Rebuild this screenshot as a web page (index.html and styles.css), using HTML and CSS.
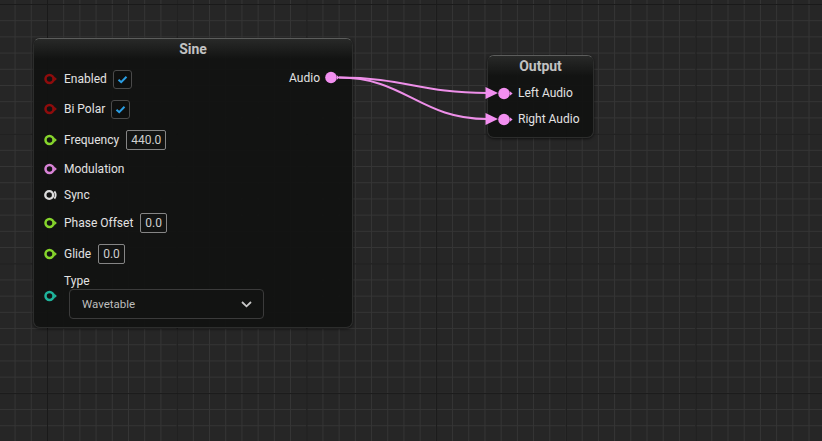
FILE: index.html
```html
<!DOCTYPE html>
<html lang="en">
<head>
    <meta charset="UTF-8">
    <title>MetaSound Graph</title>
    <link rel="stylesheet" href="styles.css">
</head>
<body>
    <div class="graph">
        <div class="node node-sine">
            <div class="node-title">Sine</div>
            <div class="node-body">
                <div class="inputs">
                    <div class="row row-check">
                        <svg class="pin" width="13" height="12" viewBox="0 0 13 12"><circle cx="5.5" cy="6" r="4" fill="none" stroke="#8e0c0c" stroke-width="2.5"/><path d="M10.2 3.6 L12.9 6 L10.2 8.4Z" fill="#8e0c0c"/></svg>
                        <span class="label">Enabled</span>
                        <span class="check"><svg width="19" height="19" viewBox="0 0 19 19"><path d="M5.5 9.8 L8.2 12.2 L13.5 6.8" fill="none" stroke="#2a9ee4" stroke-width="2"/></svg></span>
                    </div>
                    <div class="row row-check">
                        <svg class="pin" width="13" height="12" viewBox="0 0 13 12"><circle cx="5.5" cy="6" r="4" fill="none" stroke="#8e0c0c" stroke-width="2.5"/><path d="M10.2 3.6 L12.9 6 L10.2 8.4Z" fill="#8e0c0c"/></svg>
                        <span class="label">Bi Polar</span>
                        <span class="check"><svg width="19" height="19" viewBox="0 0 19 19"><path d="M5.5 9.8 L8.2 12.2 L13.5 6.8" fill="none" stroke="#2a9ee4" stroke-width="2"/></svg></span>
                    </div>
                    <div class="row row-value">
                        <svg class="pin" width="13" height="12" viewBox="0 0 13 12"><circle cx="5.5" cy="6" r="4" fill="none" stroke="#86d42c" stroke-width="2.5"/><path d="M10.2 3.6 L12.9 6 L10.2 8.4Z" fill="#86d42c"/></svg>
                        <span class="label">Frequency</span>
                        <span class="value">440.0</span>
                    </div>
                    <div class="row">
                        <svg class="pin" width="13" height="12" viewBox="0 0 13 12"><circle cx="5.5" cy="6" r="4" fill="none" stroke="#d883d6" stroke-width="2.5"/><path d="M10.2 3.6 L12.9 6 L10.2 8.4Z" fill="#d883d6"/></svg>
                        <span class="label">Modulation</span>
                    </div>
                    <div class="row row-trigger">
                        <svg class="pin" width="13" height="12" viewBox="0 0 13 12"><circle cx="5.2" cy="6" r="3.9" fill="none" stroke="#dcdcdc" stroke-width="2.4"/><path d="M10.4 2.4 Q13 6 10.4 9.6" fill="none" stroke="#dcdcdc" stroke-width="1.8"/></svg>
                        <span class="label">Sync</span>
                    </div>
                    <div class="row row-value">
                        <svg class="pin" width="13" height="12" viewBox="0 0 13 12"><circle cx="5.5" cy="6" r="4" fill="none" stroke="#86d42c" stroke-width="2.5"/><path d="M10.2 3.6 L12.9 6 L10.2 8.4Z" fill="#86d42c"/></svg>
                        <span class="label">Phase Offset</span>
                        <span class="value">0.0</span>
                    </div>
                    <div class="row row-value">
                        <svg class="pin" width="13" height="12" viewBox="0 0 13 12"><circle cx="5.5" cy="6" r="4" fill="none" stroke="#86d42c" stroke-width="2.5"/><path d="M10.2 3.6 L12.9 6 L10.2 8.4Z" fill="#86d42c"/></svg>
                        <span class="label">Glide</span>
                        <span class="value">0.0</span>
                    </div>
                    <div class="row row-enum">
                        <svg class="pin" width="13" height="12" viewBox="0 0 13 12"><circle cx="5.5" cy="6" r="4" fill="none" stroke="#1fb49c" stroke-width="2.5"/><path d="M10.2 3.6 L12.9 6 L10.2 8.4Z" fill="#1fb49c"/></svg>
                        <div class="enum">
                            <span class="label">Type</span>
                            <div class="dropdown">
                                <span>Wavetable</span>
                                <svg width="11" height="7" viewBox="0 0 11 7"><path d="M1 1 L5.5 5.3 L10 1" fill="none" stroke="#c8c8c8" stroke-width="1.8"/></svg>
                            </div>
                        </div>
                    </div>
                </div>
                <div class="outputs">
                    <div class="row">
                        <span class="label">Audio</span>
                        <svg class="pin pin-out" width="15" height="13" viewBox="0 0 15 13"><circle cx="6" cy="6.5" r="5.8" fill="#f28ff0"/><path d="M11.8 4.3 L14.6 6.5 L11.8 8.7Z" fill="#f28ff0"/></svg>
                    </div>
                </div>
            </div>
        </div>

        <div class="node node-output">
            <div class="node-title">Output</div>
            <div class="node-body">
                <div class="inputs">
                    <div class="row row-audio">
                        <svg class="pin" width="15" height="13" viewBox="0 0 15 13"><circle cx="6" cy="6.5" r="5.8" fill="#f28ff0"/><path d="M11.8 4.3 L14.6 6.5 L11.8 8.7Z" fill="#f28ff0"/></svg>
                        <span class="label">Left Audio</span>
                    </div>
                    <div class="row row-audio">
                        <svg class="pin" width="15" height="13" viewBox="0 0 15 13"><circle cx="6" cy="6.5" r="5.8" fill="#f28ff0"/><path d="M11.8 4.3 L14.6 6.5 L11.8 8.7Z" fill="#f28ff0"/></svg>
                        <span class="label">Right Audio</span>
                    </div>
                </div>
            </div>
        </div>

        <!-- wires sit over the nodes -->
        <svg class="wires" width="822" height="441" viewBox="0 0 822 441">
            <path d="M339 77.5 C 405 77.5, 420 93, 487 93" fill="none" stroke="#ee8fe9" stroke-width="2"/>
            <path d="M339 77.5 C 405 77.5, 420 119, 487 119" fill="none" stroke="#ee8fe9" stroke-width="2"/>
            <path d="M485.5 87 L498 93 L485.5 99Z" fill="#f28ff0"/>
            <path d="M485.5 113 L498 119 L485.5 125Z" fill="#f28ff0"/>
        </svg>
    </div>
</body>
</html>
```

FILE: styles.css
```css
:root{
    --grid-bg: #262626;
    --grid-minor: #353535;
    --grid-major: #1a1a1a;
    --node-bg: rgba(17, 18, 17, .94);
    --text: #e2e2e2;
}
html, body{
    margin: 0;
    padding: 0;
    font-family: Roboto, "Liberation Sans", sans-serif;
    font-size: 12px;
    color: var(--text);
}

.graph{
    position: relative;
    width: 822px;
    height: 441px;
    overflow: hidden;
    background:
        linear-gradient(to right, var(--grid-major) 1px, transparent 1px) 47px 4px / 129.7px 129.7px,
        linear-gradient(to bottom, var(--grid-major) 1px, transparent 1px) 47px 4px / 129.7px 129.7px,
        linear-gradient(to right, var(--grid-minor) 1px, transparent 1px) 14.6px 4px / 16.21px 16.21px,
        linear-gradient(to bottom, var(--grid-minor) 1px, transparent 1px) 14.6px 4px / 16.21px 16.21px,
        var(--grid-bg);
}

.node{
    position: absolute;
    box-sizing: border-box;
    background: var(--node-bg);
    border: 1px solid #2c2d2c;
    border-top-color: #5c5d5c;
    border-radius: 7px;
    box-shadow: 0 1px 3px rgba(0, 0, 0, .6);
}
.node-sine{
    left: 33px;
    top: 38px;
    width: 320px;
    height: 290px;
}
.node-output{
    left: 487px;
    top: 55px;
    width: 107px;
    height: 83px;
}

.node-title{
    height: 20px;
    line-height: 20px;
    text-align: center;
    font-weight: bold;
    font-size: 14px;
    color: #c2c2c2;
    border-radius: 6px 6px 0 0;
    background: linear-gradient(#282928, rgba(20, 21, 20, 0));
}

.node-body{
    display: flex;
    justify-content: space-between;
}
.node-sine .node-body{
    padding: 5px 12px 0 10px;
}
.node-output .node-body{
    padding: 4px 0 0 10px;
}

.row{
    display: flex;
    align-items: center;
    height: 27px;
    white-space: nowrap;
}
.row-check{
    height: 30px;
}
.row-value{
    height: 31px;
}
.row-trigger{
    height: 25px;
}
.row-audio{
    height: 26px;
}
.row-enum{
    height: auto;
    margin-top: 4px;
}

.pin{
    flex: none;
    margin-right: 7px;
}
.node-output .pin{
    margin-right: 5px;
}
.pin-out{
    margin: 0 0 0 5px;
}

.label{
    color: var(--text);
}

.check{
    display: inline-flex;
    box-sizing: border-box;
    width: 19px;
    height: 19px;
    margin-left: 6px;
    border: 1px solid #4a4a4a;
    border-radius: 3px;
    background: #0e0f0e;
}
.check svg{
    margin: -1px;
}

.value{
    box-sizing: border-box;
    height: 20px;
    line-height: 18px;
    margin-left: 7px;
    padding: 0 4px;
    border: 1px solid #858585;
    border-radius: 2px;
    color: #cfcfcf;
}

.enum{
    display: flex;
    flex-direction: column;
}
.enum .label{
    line-height: 16px;
}
.dropdown{
    display: flex;
    align-items: center;
    justify-content: space-between;
    box-sizing: border-box;
    width: 195px;
    height: 30px;
    margin: 0 0 0 5px;
    padding: 0 11px 0 12px;
    border: 1px solid #3b3b3b;
    border-radius: 4px;
    background: #121312;
    color: #bdbdbd;
    font-size: 11.5px;
}

.wires{
    position: absolute;
    left: 0;
    top: 0;
    pointer-events: none;
}
```
